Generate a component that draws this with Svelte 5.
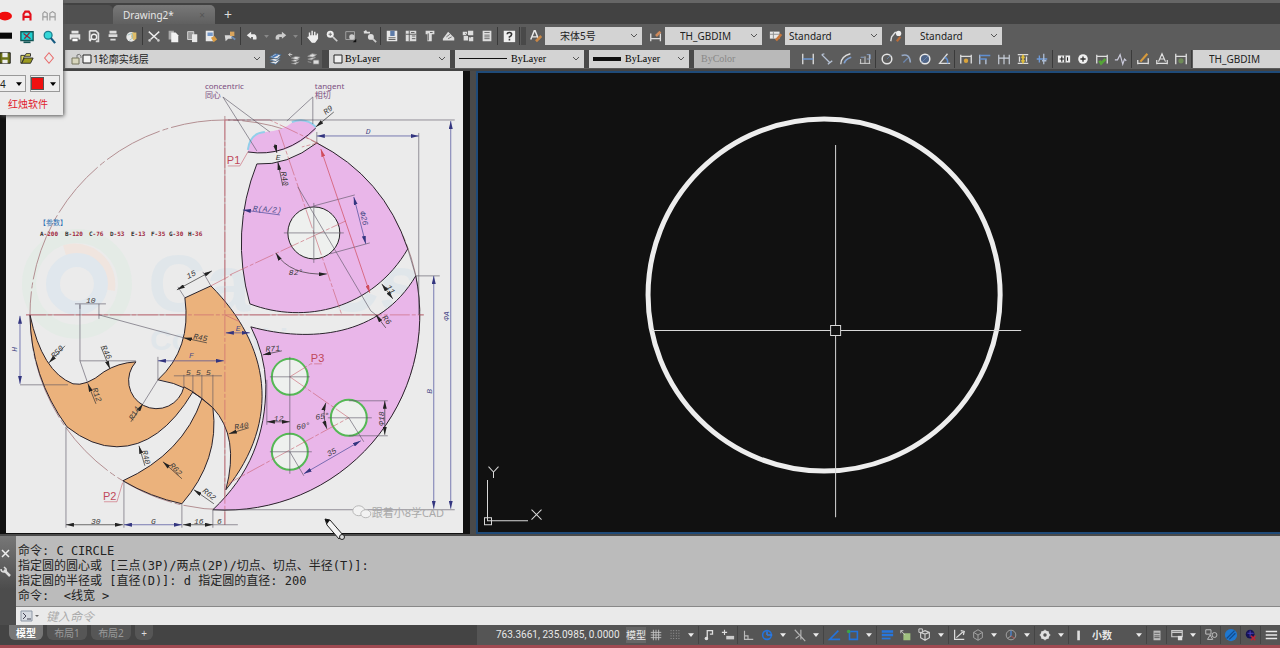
<script lang="ts">
  type Item = string;

  let command = '';

  // all icons live on a 16x16 grid
  const icons: Record<string, string> = {
    print: '<path d="M4 2h8v3H4zM2 6h12v6h-2v-2H4v2H2z" fill="#e4e4e4"/><path d="M5 11h6v3H5z" fill="#fff"/>',
    preview: '<path d="M3 2h7l3 3v9h-3M3 2v11" fill="none" stroke="#ddd" stroke-width="2"/><circle cx="8" cy="9" r="3" fill="#555" stroke="#eee" stroke-width="1.5"/><path d="M5 11l-2 3" stroke="#eee" stroke-width="2"/>',
    plot: '<path d="M4 2h8v3H4zM3 6h10v3H3zM5 11h6v2H5z" fill="#ddd"/>',
    globe: '<circle cx="7" cy="9" r="5.5" fill="#e8e8e8"/><path d="M8 4h5v7l-3 2-3-4z" fill="#e0bd67"/><path d="M3 7l5-2 1 5-4 3" fill="none" stroke="#9bb" />',
    cut: '<path d="M2 3l10 9M14 3L4 12" stroke="#eee" stroke-width="1.6"/><circle cx="3" cy="13" r="1.5" fill="#ccc"/><circle cx="13" cy="13" r="1.5" fill="#ccc"/>',
    copy: '<path d="M3 2h6v10H3z" fill="#aaa"/><path d="M6 4h5l3 3v8H6z" fill="#f2f2f2"/>',
    paste: '<path d="M3 3h7v9H3z" fill="#999" stroke="#ddd"/><path d="M8 6h6v9H8z" fill="#e8e8e8"/>',
    sheet: '<path d="M2 2h9v12H2z" fill="#e8e8e8"/><path d="M4 4h6v4H4z" fill="#7397c8"/><path d="M8 10l4-2 3 4-4 3z" fill="#d99b42"/>',
    brush: '<path d="M2 7h8v4H6l-3 3z" fill="#d7d7d7"/><path d="M8 3h5v5H8z" fill="#d9a45c"/><path d="M10 9l4 3" stroke="#6b8bb5" stroke-width="2"/>',
    undo: '<path d="M2 7l5-4v3h4q3 1 2 6H9V9H7v2z" fill="#ececec"/>',
    redo: '<path d="M14 7L9 3v3H5Q1 7 2 12h4V9h3v2z" fill="#ccc"/>',
    hand: '<path d="M4 8V4M7 8V2M10 8V3M13 9V5M4 8h9v3l-3 4H7L2 9" fill="#eee" stroke="#eee" stroke-width="1.6"/>',
    zoom: '<circle cx="6" cy="6" r="4" fill="#eee"/><path d="M9 9l5 5" stroke="#ccc" stroke-width="2"/><path d="M4 6h4M6 4v4" stroke="#666"/>',
    zoomWin: '<path d="M2 3h10v9H2z" fill="none" stroke="#aaa"/><circle cx="9" cy="9" r="3" fill="#ccc"/><path d="M14 11v4h-4z" fill="#111"/>',
    zoomPrev: '<path d="M1 4h7M1 4l3-2" stroke="#ddd" stroke-width="2"/><circle cx="9" cy="9" r="3.4" fill="#ddd"/><path d="M11 11l4 4" stroke="#ccc" stroke-width="2"/>',
    props: '<path d="M2 2h12v12H2z" fill="#e8e8e8"/><path d="M6 2h5v6H6z" fill="#5d7ba8"/><path d="M4 10h8M4 12h8" stroke="#555"/>',
    center: '<path d="M2 2h12v12H2z" fill="#ddd"/><path d="M6 2v12M2 6h12M9 8h4M9 11h4M8 4h4" stroke="#555"/>',
    palette: '<path d="M3 2h10v4h-3v8H5V6H3z" fill="#ddd"/><path d="M6 5v8M8 4h3" stroke="#555"/>',
    sheets: '<path d="M1 11l6-8 7 7v3H1z" fill="#ddd"/><path d="M5 9l4-3M7 11l4-2" stroke="#666"/>',
    markup: '<path d="M2 3h5v4H2zM8 2h6v5H8zM3 8h5v5H3zM9 9h5v5H9z" fill="#ddd"/><path d="M5 5l6 5" stroke="#555"/>',
    calc: '<path d="M3 2h10v12H3z" fill="#ddd"/><path d="M5 4h6M5 7h6M5 9h6M5 11h6" stroke="#666"/>',
    help: '<path d="M2 2h13v13H2z" fill="#f0f0f0"/><path d="M6 6q0-2 2.500-2t2.500 2-2.500 3v1M8.500 11v2" stroke="#333" stroke-width="1.800" fill="none"/>',
    textStyle: '<path d="M2 12L6 2h1l4 10M4 9h5" stroke="#e8e8e8" stroke-width="1.700" fill="none"/><path d="M8 14l6-6" stroke="#c88646" stroke-width="3"/>',
    dimStyle: '<path d="M2 5v9M13 5v9M2 11h11" stroke="#ddd" stroke-width="1.500"/><path d="M8 8l5-5" stroke="#d08a5a" stroke-width="3"/>',
    tableStyle: '<path d="M1 3h11v8H1z" fill="#e8e8e8"/><path d="M1 6h11M5 3v8" stroke="#888"/><path d="M8 13l6-7" stroke="#c9773b" stroke-width="3"/>',
    leaderStyle: '<path d="M2 14l1-5 4-5h2" stroke="#ddd" stroke-width="1.600" fill="none"/><circle cx="11" cy="5" r="3" fill="#eee"/><path d="M9 14l4-5" stroke="#b96a36" stroke-width="2.500"/>',
    layers: '<path d="M2 6l6-4 7 1-5 5zM2 9l7 2 5-5M2 12l7 2 5-5" fill="#e6e6e6" stroke="#44688f"/><path d="M5 6l6-3" stroke="#4778b8" stroke-width="2"/>',
    layerPrev: '<path d="M2 3h4M2 3l2-2M2 3l2 2" stroke="#ddd"/><path d="M5 7l5-2 5 1-4 3zM5 10l5 1 4-3M5 13l5 1 4-3" fill="#ddd" stroke="#888"/>',
    layerState: '<path d="M2 5l5-3 5 1-4 3zM2 8l4 1 5-3M2 11l4 1" fill="#ddd" stroke="#999"/><path d="M8 9h7v5H8z" fill="#ddd" stroke="#666"/>',
    dLin: '<path d="M2 2v12M14 2v12" stroke="#e0e0e0" stroke-width="1.500"/><path d="M2 8h12" stroke="#6f9bd8" stroke-width="1.600"/>',
    dAli: '<path d="M2 3l3-1M2 3l9 9M9 14l5-4" stroke="#b7c3d5" stroke-width="1.500"/>',
    dArc: '<path d="M2 14Q2 5 13 2" stroke="#ddd" stroke-width="1.500" fill="none"/><path d="M6 13Q7 8 14 6" stroke="#7c9dce" stroke-width="2" fill="none"/>',
    dOrd: '<path d="M2 13h12M3 8v5M8 5v8M13 3v10" stroke="#ddd"/><path d="M10 3h4v5h-4M3 6h4" stroke="#89a6d0" fill="none"/>',
    dRad: '<circle cx="8" cy="8" r="5.500" fill="none" stroke="#e4e4e4" stroke-width="1.700"/><path d="M8 8l4-4" stroke="#6783a8"/>',
    dJog: '<path d="M3 4Q12 1 13 12" stroke="#96a9c6" stroke-width="1.800" fill="none"/><path d="M5 12l5-5" stroke="#6b87b1" stroke-width="1.500"/>',
    dDia: '<circle cx="8" cy="8" r="5.500" fill="#4f6486" stroke="#e8e8e8" stroke-width="1.700"/><path d="M4 12l8-8" stroke="#6c87b0"/>',
    dAng: '<path d="M12 2L3 13h12" stroke="#ddd" stroke-width="1.500" fill="none"/><path d="M9 6q4 2 3 7" stroke="#5f8ed1" stroke-width="1.800" fill="none"/>',
    qdim: '<path d="M2 3v10M14 3v10M2 5h12" stroke="#ddd" stroke-width="1.500"/><circle cx="8" cy="10" r="2.500" fill="#d9a33c"/>',
    base: '<path d="M2 3v11M9 8v6" stroke="#b8c7dd" stroke-width="1.500"/><path d="M2 4h12M2 8h8" stroke="#5f8ed1" stroke-width="1.700"/>',
    cont: '<path d="M2 3v11M8 3v11M14 3v11M2 7h12" stroke="#ccd3de" stroke-width="1.300"/>',
    space: '<path d="M2 3h12M2 13h12M4 5v6M12 5v6" stroke="#ddd" stroke-width="1.500"/><path d="M8 3v10M6 6h4M6 10h4" stroke="#e0bf3c" stroke-width="2"/>',
    brk: '<path d="M2 8h12M5 4v8" stroke="#6f9bd8" stroke-width="1.500"/><path d="M10 2v12M8 10h5" stroke="#aebdd4" stroke-width="1.500"/>',
    tol: '<path d="M1 4h14v8H1z" fill="#eee"/><path d="M3 8h5M5.500 5v6M9 4v8M12 6v4" stroke="#222" stroke-width="1.300"/>',
    mark: '<circle cx="8" cy="8" r="5.500" fill="#f0f0f0"/><path d="M5 8h6M8 5v6" stroke="#333" stroke-width="1.500"/>',
    insp: '<path d="M2 3v10M14 3v10M2 5h12" stroke="#ddd" stroke-width="1.500"/><path d="M5 10l2 3 5-5" stroke="#55a437" stroke-width="3" fill="none"/>',
    jog: '<path d="M1 9h3l3-6 3 11 2-6 2 2" stroke="#ccd" stroke-width="1.300" fill="none"/>',
    dEdit: '<path d="M2 9v5M14 7v7M2 13h12" stroke="#ddd" stroke-width="1.500"/><path d="M5 11l8-9" stroke="#d79a3b" stroke-width="2.500"/>',
    dText: '<path d="M2 9v5M14 9v5M2 13h12M4 11l4-9 4 9M6 8h4" stroke="#e0e0e0" stroke-width="1.400" fill="none"/>',
    dUpd: '<path d="M2 2v12M14 2v12M2 5h12" stroke="#ddd" stroke-width="1.500"/><circle cx="8" cy="10" r="3" fill="#6f8a58"/>',
    grid: '<path d="M5 2v12M8 2v12M11 2v12M2 5h12M2 8h12M2 11h12" stroke="#c5c5c5"/>',
    snap: '<path d="M3 3h11M3 6h11M3 9h11M3 12h11" stroke="#aaa" stroke-dasharray="1 2"/>',
    infer: '<path d="M6 13V3h6v4H9" stroke="#ddd" stroke-width="1.500" fill="none"/><circle cx="5" cy="12" r="2" fill="#ddd"/>',
    dyn: '<path d="M4 2v6M1 5h6" stroke="#ddd" stroke-width="1.300"/><path d="M6 9h9v4H6z" fill="#ccc"/>',
    ortho: '<path d="M4 3v10h10M4 9h4v4" stroke="#bbb" stroke-width="1.300" fill="none"/>',
    polar: '<circle cx="8" cy="8" r="5" fill="none" stroke="#2373dc" stroke-width="1.800"/><path d="M8 8h6M8 8V4" stroke="#2e7ce6" stroke-width="1.800"/>',
    iso: '<path d="M2 2l12 13M9 2v11M3 12l4-3" stroke="#b5b5b5" stroke-width="1.300"/>',
    otrack: '<path d="M13 3L3 13h12" stroke="#2373dc" stroke-width="1.800" fill="none"/>',
    osnap: '<path d="M4 4h9v9H4z" fill="none" stroke="#2373dc" stroke-width="1.800"/><circle cx="3" cy="4" r="2" fill="#3ea444"/>',
    lwt: '<path d="M2 4h13M2 8h13" stroke="#2676dd" stroke-width="3"/><path d="M2 12h10" stroke="#2676dd" stroke-width="2"/>',
    cycle: '<path d="M5 6h8v8H5z" fill="#9fc07f"/><path d="M2 3l5 5M2 3v3M2 3h3" stroke="#ccc"/>',
    osnap3: '<path d="M8 3l5 2v6l-5 3-5-3V5zM3 5l5 2 5-2M8 7v7" fill="none" stroke="#d0d0d0" stroke-width="1.300"/><path d="M1 1h4v4H1z" fill="#555" stroke="#ddd"/>',
    ducs: '<path d="M3 2v11h11M5 11l8-7M10 3l4 1-1 4" fill="none" stroke="#ddd" stroke-width="1.400"/>',
    filter: '<path d="M8 2l5 3v6l-5 3-5-3V5zM3 5l5 3 5-3M8 8v6" fill="none" stroke="#aaa"/>',
    gizmo: '<circle cx="8" cy="8" r="5.500" fill="none" stroke="#aaa"/><path d="M8 3v6" stroke="#4a86d4" stroke-width="1.500"/><path d="M8 9l4 3" stroke="#bd5050"/><path d="M8 9l-4 3" stroke="#aaa"/>',
    gear: '<circle cx="8" cy="8" r="3.700" fill="none" stroke="#e0e0e0" stroke-width="3"/><path d="M8 2v12M2 8h12M4 4l8 8M12 4l-8 8" stroke="#e0e0e0" stroke-width="1.500"/><circle cx="8" cy="8" r="2" fill="#555"/>',
    bar: '<path d="M6 3h3v11H6z" fill="#ddd"/>',
    quick: '<path d="M4 3h8v11H4z" fill="#bbb"/><path d="M5 6h6M5 9h6M5 11h6" stroke="#555"/>',
    lock: '<path d="M2 3h12v7H2zM2 5h12" fill="none" stroke="#ccc" stroke-width="1.300"/><path d="M9 9h5v5H9z" fill="#e0e0e0"/>',
    isolate: '<path d="M2 2h6v5H2zM7 8l3 5H4z" fill="none" stroke="#ccc"/><circle cx="12" cy="8" r="2.800" fill="none" stroke="#ccc"/>',
    hw: '<circle cx="8" cy="8" r="7" fill="#1f78d1"/><path d="M3 12l9-9M6 13l7-7" stroke="#134c8f" stroke-width="1.500"/>',
    cloud: '<circle cx="7" cy="7" r="5" fill="#151255"/><path d="M4 6h7M7 3v7" stroke="#5146c9"/><path d="M8 9l5 5M13 9l-5 5" stroke="#bd2539" stroke-width="1.800"/>',
    menu: '<path d="M2 4h13M2 8h13M2 12h13" stroke="#e8e8e8" stroke-width="1.800"/>',
    // floating palette
    dot: '<ellipse cx="8" cy="8" rx="8" ry="5" fill="#f00c0c"/>',
    bigA: '<path d="M4 13V6l2-3h4l2 3v7M4 9h8" fill="none" stroke="#e3101c" stroke-width="2.400"/>',
    twoA: '<path d="M1 13V5l2-2 3 2v8M1 9h5M9 13V5l3-2 3 2v8M9 9h6" fill="none" stroke="#9a9a9a" stroke-width="1.300"/>',
    slab: '<path d="M0 3h16v7H0z" fill="#080808"/>',
    screen: '<path d="M1 2h14v10H1z" fill="#20d0d0" stroke="#155" stroke-width="1.500"/><path d="M4 4l8 6M11 3l-6 7" stroke="#8d2c3c" stroke-width="1.500"/><path d="M4 14h8" stroke="#155" stroke-width="2"/>',
    lens: '<circle cx="7" cy="6" r="4.500" fill="#35d8d8" stroke="#1c8090" stroke-width="1.500"/><path d="M10 9l5 6" stroke="#155a80" stroke-width="2.500"/>',
    save: '<path d="M2 2h12v12H2z" fill="#6d7318" stroke="#111"/><path d="M5 2h6v5H5zM5 10h6v4H5z" fill="#eee"/>',
    open: '<path d="M1 5h5l1-2h5v3H5l-3 8H1z" fill="#ded95d" stroke="#222"/><path d="M5 8h10l-3 6H2z" fill="#9b9a20" stroke="#222"/>',
    eraser: '<path d="M8 2l5 6-5 6-5-6z" fill="none" stroke="#e86a6a" stroke-width="1.200"/>'
  };

  // '|' draws a separator, '>' a small drop arrow
  const standard: Item[] = [
    'print', 'preview', 'plot', 'globe', '|', 'cut', 'copy', 'paste', 'sheet', 'brush', '|',
    'undo', '>', 'redo', '>', '|', 'hand', 'zoom', 'zoomWin', 'zoomPrev', '|',
    'props', 'center', 'palette', 'sheets', 'markup', 'calc', '|', 'help', '|'
  ];
  const styles = [
    { icon: 'textStyle', value: '宋体5号', indent: true },
    { icon: 'dimStyle', value: 'TH_GBDIM', indent: true },
    { icon: 'tableStyle', value: 'Standard', indent: false },
    { icon: 'leaderStyle', value: 'Standard', indent: true }
  ];
  const dimension: Item[] = [
    'dLin', 'dAli', 'dArc', 'dOrd', '|', 'dRad', 'dJog', 'dDia', 'dAng', '|',
    'qdim', 'base', 'cont', 'space', 'brk', '|', 'tol', 'mark', 'insp', 'jog', '|',
    'dEdit', 'dText', 'dUpd', '|'
  ];
  const statusLeft: Item[] = [
    'grid', 'snap', '>', '|', 'infer', 'dyn', '|', 'ortho', 'polar', '>', 'iso', '>', '|',
    'otrack', 'osnap', '>', '|', 'lwt', 'cycle', 'osnap3', '>', '|', 'ducs', 'filter', '>',
    'gizmo', '>', '|', 'gear', '>', '|', 'bar'
  ];
  const statusRight: Item[] = ['quick', '|', 'lock', '>', '|', 'isolate', '|', 'hw', '|', 'cloud', '|', 'menu'];
  const markers = ['dot', 'bigA', 'twoA', 'slab', 'screen', 'lens', 'save', 'open', 'eraser'];

  const history = [
    '命令: C CIRCLE',
    '指定圆的圆心或 [三点(3P)/两点(2P)/切点、切点、半径(T)]:',
    '指定圆的半径或 [直径(D)]: d 指定圆的直径: 200',
    '命令:  <线宽 >'
  ];

  const params = [
    ['A', '200'], ['B', '120'], ['C', '76'], ['D', '53'],
    ['E', '13'], ['F', '35'], ['G', '30'], ['H', '36']
  ];
  const paramX = [40, 65, 89, 110, 131, 151, 169, 188];

  // x, y, rotation, text, ink
  const labels: [number, number, number, string, string][] = [
    [326, 115, -38, 'R9', 'k'], [366, 134, 0, 'D', 'b'], [276, 160, 0, 'E', 'k'],
    [281, 172, 80, 'R40', 'k'], [253, 211, 4, 'R(A/2)', 'b'], [360, 212, 76, 'Φ26', 'b'],
    [289, 275, 0, '82°', 'k'], [386, 287, 55, '11', 'k'], [382, 318, 50, 'R6', 'k'],
    [188, 279, -26, '15', 'k'], [86, 303, 0, '10', 'k'], [193, 339, 10, 'R45', 'k'],
    [54, 359, -45, 'R50', 'k'], [101, 347, 64, 'R46', 'k'], [92, 389, 70, 'R12', 'k'],
    [133, 421, -60, 'R14', 'k'], [17, 352, -90, 'H', 'b'], [189, 358, 0, 'F', 'b'],
    [186, 375, 0, '5', 'k'], [196, 375, 0, '5', 'k'], [206, 375, 0, '5', 'k'],
    [236, 331, 0, 'E', 'b'], [266, 352, -5, 'R71', 'k'], [235, 430, -10, 'R40', 'k'],
    [142, 451, 76, 'R40', 'k'], [169, 466, 46, 'R62', 'k'], [202, 492, 38, 'R62', 'k'],
    [91, 524, 0, '30', 'k'], [151, 524, 0, 'G', 'k'], [194, 524, 0, '16', 'k'],
    [217, 524, 0, '6', 'k'], [274, 421, 0, '12', 'k'], [297, 430, -10, '60°', 'k'],
    [316, 420, -8, '65°', 'k'], [384, 426, -90, 'Φ18', 'k'], [329, 457, -30, '35', 'k'],
    [432, 394, -90, 'B', 'b'], [449, 321, -90, 'ΦA', 'b']
  ];

  // dimension lines with an arrow head at both ends
  const dims: [string, string][] = [
    ['M317 136H419', 'b'], ['M451 121V509', 'b'], ['M434 276V509', 'b'], ['M20 316V384', 'b'],
    ['M158 361H224', 'b'], ['M66 525H123', 'k'], ['M124 525H182', 'b'], ['M183 525H213', 'k'],
    ['M354 197L366 244', 'b'], ['M385 401V435', 'k'], ['M304 474L361 441', 'b'], ['M226 333H250', 'b'],
    ['M382 284L393 299', 'k'], ['M276 253Q290 276 327 274', 'k'], ['M267 422H290', 'k'],
    ['M177 290L212 271', 'k'], ['M326 403Q322 415 327 429', 'k'], ['M321 149L370 293', 'r']
  ];
  // leaders with one head at the start
  const leaders: [string, string][] = [
    ['M316 127L334 112', 'k'], ['M278 162L283 186', 'k'], ['M243 210L280 215', 'b'], ['M376 315L386 328', 'k'],
    ['M184 338L207 343', 'k'], ['M49 363L65 346', 'k'], ['M110 369L101 347', 'k'], ['M88 384L96 404', 'k'],
    ['M143 404L131 422', 'k'], ['M139 446L145 466', 'k'], ['M163 462L182 479', 'k'], ['M194 490L214 504', 'k'],
    ['M229 434L249 428', 'k'], ['M263 355L282 351', 'k'], ['M277 153L275 144', 'k']
  ];
</script>

{#snippet glyph(name: string)}
  <svg class="glyph" viewBox="0 0 16 16" aria-hidden="true">{@html icons[name]}</svg>
{/snippet}

{#snippet chevron()}
  <svg class="chevron" viewBox="0 0 8 6" aria-hidden="true"><path d="M1 1l3 3 3-3" fill="none" stroke="#555" /></svg>
{/snippet}

{#snippet strip(items: Item[])}
  {#each items as item}
    {#if item === '|'}
      <span class="sep"></span>
    {:else if item === '>'}
      <button class="drop" aria-label="more"><svg viewBox="0 0 8 5"><path d="M0 0h8L4 5z" /></svg></button>
    {:else}
      <button class="tool" aria-label={item}>{@render glyph(item)}</button>
    {/if}
  {/each}
{/snippet}

<div class="app">
  <header class="tabs">
    <span class="file-tab blank"></span>
    <button class="file-tab active">Drawing2* <span class="close">×</span></button>
    <button class="add" aria-label="new drawing">+</button>
  </header>

  <div class="toolbar first">
    {@render strip(standard)}
    <span class="grip"></span>
    {#each styles as style}
      <button class="tool" aria-label={style.icon}>{@render glyph(style.icon)}</button>
      <div class="combo named" class:indent={style.indent}>
        <select aria-label={style.icon}><option>{style.value}</option></select>
        {@render chevron()}
      </div>
    {/each}
  </div>

  <div class="toolbar second">
    <div class="combo layer">
      <svg class="lead" viewBox="0 0 24 14" aria-hidden="true">
        <path d="M3 6h7v6H3z" fill="#d8d6bd" stroke="#77765f" />
        <path d="M8 6V3q3-2 4 1v2" fill="none" stroke="#777" />
        <path d="M14 3h8v8h-8z" fill="#f4f4f4" stroke="#222" />
      </svg>
      <select aria-label="layer"><option>1轮廓实线层</option></select>
      {@render chevron()}
    </div>
    {@render strip(['layers', 'layerPrev', 'layerState'])}
    <span class="grip wide"></span>
    <div class="combo color">
      <svg class="swatch" viewBox="0 0 10 10" aria-hidden="true"><path d="M1 1h8v8H1z" fill="#eee" stroke="#222" /></svg>
      <select aria-label="color"><option>ByLayer</option></select>
      {@render chevron()}
    </div>
    <span class="grip"></span>
    <div class="combo linetype">
      <span class="sample thin"></span>
      <select aria-label="linetype"><option>ByLayer</option></select>
      {@render chevron()}
    </div>
    <span class="grip"></span>
    <div class="combo weight">
      <span class="sample thick"></span>
      <select aria-label="lineweight"><option>ByLayer</option></select>
      {@render chevron()}
    </div>
    <span class="grip"></span>
    <div class="combo plotstyle">
      <select aria-label="plot style" disabled><option>ByColor</option></select>
      {@render chevron()}
    </div>
    <span class="space"></span>
    {@render strip(dimension)}
    <div class="combo last">
      <select aria-label="dimension style"><option>TH_GBDIM</option></select>
    </div>
  </div>

  <main>
    <section class="sheet">
      <svg class="plan" viewBox="6 71 457 462" preserveAspectRatio="xMinYMin meet">
        <defs>
          {#each [['k', '#222'], ['b', '#33357f'], ['r', '#d04c5c']] as [id, fill]}
            <marker id="head-{id}" viewBox="0 0 8 4" refX="8" refY="2" markerWidth="8" markerHeight="4" markerUnits="userSpaceOnUse" orient="auto-start-reverse">
              <path d="M0 0L8 2L0 4z" {fill} />
            </marker>
          {/each}
        </defs>

        <g class="watermark">
          <circle cx="77" cy="284" r="48" stroke="#e4ebe6" />
          <path d="M65 252A34 34 0 0 1 108 290" stroke="#f0e5df" />
          <circle cx="77" cy="284" r="24" stroke="#e0e7ed" />
          <text x="148" y="311" class="big">CaTICs</text>
          <text x="150" y="350" class="mid">Competition</text>
        </g>

        <g class="axis">
          <path d="M225 116V525M26 315H424" />
          <circle cx="225" cy="315" r="195" stroke-dasharray="60 3 6 3" />
        </g>

        <g class="pink">
          <path class="soft" d="M248 152Q250 133 265 132Q283 131 293 122Q306 117 315 127L316 130Q285 159 248 152z" />
          <path d="M257 164Q287 166 317 143Q384 177 408 249C373 309 305 325 250 304Q230 232 257 164z" />
          <path d="M416 276A195 195 0 0 1 213 510C250 475 266 435 266 385Q265 354 251 327C310 343 380 337 416 276z" />
        </g>
        <g class="orange">
          <path d="M185 298L211 286C270 345 282 420 226 490Q240 437 213 408Q190 385 158 380Q192 349 185 298z" />
          <path d="M30 315Q42 372 73 384Q86 387 104 372Q118 363 136 362A28 28 0 1 0 184 387L193 392Q160 447 117 447Q92 447 67 427A195 195 0 0 1 30 315z" />
          <path d="M202 399Q183 454 123 481A195 195 0 0 0 182 504Q220 460 213 408z" />
        </g>
        <path class="edge" d="M248 152Q286 158 316 128M193 392L202 399" />
        <path class="cyan" d="M248 150Q250 133 265 132M292 122Q306 117 316 127" />

        <circle class="hole" cx="314" cy="233" r="26" />
        <circle class="hole green" cx="290" cy="377" r="18" />
        <circle class="hole green" cx="349" cy="418" r="18" />
        <circle class="hole green" cx="290" cy="452" r="18" />

        <g class="red">
          <path d="M225 120V525M26 315H424M225 120H270L318 143L302 147M279 130L342 315M230 275L346 221" />
          <path d="M290 377L349 418L228 484M290 377L311 364H322M240 166H228M240 166L248 152M117 502H104M117 502L123 482" />
          <path d="M211 286L232 275M225 315L240 322" />
        </g>
        <g class="thin">
          <path d="M223 97L257 151M223 97L270 132M313 97L287 121M313 97V124M298 187L371 311L380 318" />
          <path d="M99 315L184 338M80 305V361L88 384M80 361H136M75 304H106M80 304V309M99 304V319M20 385H68M158 380L143 404M158 380V357" />
          <path d="M66 427V528M124 481V528M182 504V528M213 510V528M184 387V375M193 392V375M202 399V375M213 408V375M174 376H222M213 525H238" />
          <path d="M317 143V132M419 133V315M314 206L355 195M330 254L370 243M349 401H388M349 436H388M349 418L364 442M290 452L304 476M290 357V474M270 377H310M270 452H312M328 418H372M284 233H344M314 203V263" />
          <path d="M408 249L416 276H440M267 380V425M185 298L178 287M211 286L203 272M228 120H455M213 510H455" />
        </g>

        {#each dims as [d, ink]}
          <path class="dim {ink}" {d} marker-start="url(#head-{ink})" marker-end="url(#head-{ink})" />
        {/each}
        {#each leaders as [d, ink]}
          <path class="dim {ink}" {d} marker-start="url(#head-{ink})" />
        {/each}

        {#each labels as [x, y, turn, text, ink]}
          <text class="label {ink}" transform="translate({x} {y}) rotate({turn})">{text}</text>
        {/each}

        <g class="note">
          <text x="205" y="89">concentric</text>
          <text x="205" y="98">同心</text>
          <text x="315" y="89">tangent</text>
          <text x="315" y="98">相切</text>
        </g>
        <g class="point">
          <text x="227" y="164">P1</text>
          <text x="103" y="500">P2</text>
          <text x="311" y="362">P3</text>
        </g>
        <text class="caption" x="39" y="225">【参数】</text>
        {#each params as [name, value], i}
          <text class="param" x={paramX[i]} y="236">{name}<tspan class="value">-{value}</tspan></text>
        {/each}
        <g class="brand">
          <ellipse cx="359" cy="511" rx="6" ry="5" />
          <ellipse cx="366" cy="514" rx="5" ry="4" />
          <text x="372" y="517">跟着小8学CAD</text>
        </g>
      </svg>
      <svg class="pencil" viewBox="0 0 22 23" aria-hidden="true">
        <path d="M1 1l5 1 13 15-4 4L3 7z" fill="#f4f4f4" stroke="#222" />
        <path d="M1 1l5 1-3 4z" fill="#111" />
        <circle cx="18" cy="19" r="2.500" fill="#ddd" stroke="#222" />
      </svg>
    </section>

    <section class="model">
      <svg viewBox="478 73 802 458" preserveAspectRatio="xMinYMin meet">
        <circle cx="824" cy="295" r="176" class="ring" />
        <path class="cross" d="M652 330.500H830M841 330.500H1021M835.500 145V325M835.500 336V517M830.500 325.500h10v10h-10z" />
        <path class="ucs" d="M484.500 517.500h7v7h-7zM487.500 480V521M488 520.500H528" />
        <path class="ucs" d="M488.500 466.500L493.500 472L498.500 466.500M493.500 472V478M531.500 509.500L541.500 519.500M541.500 509.500L531.500 519.500" />
      </svg>
    </section>
  </main>

  <section class="console">
    <div class="rail">
      <svg viewBox="0 0 12 12"><path d="M2 2l7 7M9 2l-7 7" stroke="#eee" stroke-width="1.500" /></svg>
      <svg viewBox="0 0 12 12"><path d="M4 4l6 6" stroke="#ddd" stroke-width="2.500" /><path d="M1 3q0 3 3 3t2-3L4 1" fill="none" stroke="#ddd" stroke-width="1.500" /></svg>
    </div>
    <div class="log">
      <pre>{history.join('\n')}</pre>
      <label class="prompt">
        <svg viewBox="0 0 22 12" aria-hidden="true">
          <path d="M1 1h11v10H1z" fill="#d5dae0" stroke="#8d97a5" />
          <path d="M3 3l3 3-3 3M7 9h4" fill="none" stroke="#445" />
          <path d="M15 5h4l-2 2z" fill="#666" />
        </svg>
        <input bind:value={command} placeholder="键入命令" aria-label="command" />
      </label>
    </div>
  </section>

  <footer>
    <nav>
      <button class="layout current">模型</button>
      <button class="layout">布局1</button>
      <button class="layout">布局2</button>
      <button class="layout plus" aria-label="new layout">+</button>
    </nav>
    <div class="status">
      <output>763.3661, 235.0985, 0.0000</output>
      <button class="space-name">模型</button>
      {@render strip(statusLeft)}
      <div class="units">
        <select aria-label="units"><option>小数</option></select>
        <svg viewBox="0 0 8 5" aria-hidden="true"><path d="M0 0h8L4 5z" /></svg>
      </div>
      <span class="sep"></span>
      {@render strip(statusRight)}
    </div>
  </footer>

  <aside class="pens">
    <div class="keys">
      {#each markers as name}
        <button aria-label={name}>{@render glyph(name)}</button>
      {/each}
    </div>
    <div class="picks">
      <div class="pick">
        <select aria-label="pen width"><option>4</option></select>
        <svg viewBox="0 0 8 5"><path d="M0 0h8L4 5z" /></svg>
      </div>
      <button class="pick ink" aria-label="pen color">
        <i></i>
        <svg viewBox="0 0 8 5"><path d="M0 0h8L4 5z" /></svg>
      </button>
    </div>
    <p>红烛软件</p>
  </aside>
</div>

<style>
  :global(body) {
    margin: 0;
    background: #444;
  }

  .app {
    position: relative;
    display: flex;
    flex-direction: column;
    min-height: 100vh;
    overflow: hidden;
    font: 10px/14px 'Noto Sans', 'Noto Sans CJK SC', sans-serif;
    color: #222;
  }

  button,
  select,
  input {
    margin: 0;
    padding: 0;
    border: 0;
    background: none;
    color: inherit;
    font: inherit;
    appearance: none;
    outline: none;
  }

  svg {
    display: block;
  }

  .tabs {
    display: flex;
    align-items: stretch;
    height: 19px;
    padding-top: 2px;
    border-top: 3px solid #666;
    background: #424242;
  }

  .file-tab {
    width: 102px;
    border-radius: 5px 5px 0 0;
  }

  .file-tab.blank {
    width: 113px;
    background: #505050;
  }

  .file-tab.active {
    display: flex;
    justify-content: space-between;
    align-items: center;
    padding: 0 10px;
    background: linear-gradient(#787878, #606060);
    color: #e6e6e6;
  }

  .close {
    color: #555;
  }

  .add {
    width: 26px;
    color: #ddd;
    font-size: 14px;
  }

  .toolbar {
    display: flex;
    align-items: center;
    padding-left: 65px;
    background: #5c5c5c;
  }

  .toolbar.first {
    height: 24px;
  }

  .toolbar.second {
    height: 21px;
    border-bottom: 2px solid #444;
  }

  .tool {
    display: flex;
    flex: none;
    justify-content: center;
    width: 19px;
  }

  .glyph {
    width: 14px;
    height: 14px;
  }

  .drop {
    display: flex;
    flex: none;
    justify-content: center;
    width: 10px;
  }

  .drop svg {
    width: 5px;
    height: 3px;
    fill: #888;
  }

  .sep {
    flex: none;
    width: 1px;
    height: 18px;
    margin: 0 1px;
    background: #3a3a3a;
  }

  .grip {
    flex: none;
    width: 5px;
    height: 18px;
    background: #494949;
  }

  .grip.wide {
    width: 7px;
  }

  .space {
    width: 8px;
  }

  .combo {
    display: flex;
    flex: none;
    align-items: center;
    box-sizing: border-box;
    height: 18px;
    padding: 0 4px;
    background: #d3d3d3;
  }

  .combo select {
    flex: 1;
    min-width: 0;
    height: 18px;
  }

  .chevron {
    width: 8px;
    height: 6px;
  }

  .named {
    width: 97px;
    margin-right: 4px;
  }

  .indent {
    padding-left: 15px;
  }

  .layer {
    width: 200px;
  }

  .lead {
    width: 24px;
    height: 14px;
  }

  .color,
  .linetype,
  .weight,
  .plotstyle {
    font: 10px/14px 'Liberation Serif', serif;
    color: #000;
  }

  .color {
    width: 121px;
  }

  .linetype {
    width: 129px;
  }

  .weight {
    width: 100px;
  }

  .plotstyle {
    width: 96px;
    padding-left: 7px;
    background: #b9b9b9;
    color: #888;
  }

  .plotstyle select {
    opacity: 1;
  }

  .plotstyle .chevron {
    visibility: hidden;
  }

  .swatch {
    width: 10px;
    height: 10px;
    margin-right: 2px;
  }

  .sample {
    flex: none;
    margin-right: 4px;
    background: #111;
  }

  .thin {
    width: 48px;
    height: 1px;
  }

  .thick {
    width: 28px;
    height: 4px;
  }

  .last {
    flex: 1;
    padding-left: 16px;
  }

  main {
    display: flex;
    flex: 1;
    background: #4a4a4a;
  }

  .sheet {
    position: relative;
    flex: none;
    width: 36.7%;
    padding: 0 7px 0 6px;
    box-sizing: border-box;
    background: #111;
  }

  .plan {
    width: 100%;
    background: #ebebeb;
  }

  .pencil {
    position: absolute;
    left: 69%;
    bottom: -7px;
    width: 22px;
    height: 23px;
    z-index: 1;
  }

  .model {
    flex: 1;
    margin-left: 6px;
    border: 2px solid #1f4a78;
    border-right: 0;
    background: #111;
  }

  .ring {
    fill: none;
    stroke: #ededed;
    stroke-width: 5;
  }

  .cross,
  .ucs {
    fill: none;
    stroke: #d8d8d8;
  }

  .watermark {
    fill: none;
    stroke-width: 14;
  }

  .watermark text {
    fill: #e0e6ea;
    stroke: none;
    font-family: 'Liberation Sans', sans-serif;
    font-weight: bold;
  }

  .big {
    font-size: 80px;
  }

  .mid {
    font-size: 30px;
  }

  .axis,
  .red,
  .thin {
    fill: none;
    stroke-width: 1;
  }

  .axis {
    stroke: #b38f92;
  }

  .red {
    stroke: #c9606e;
    stroke-opacity: 0.6;
    stroke-dasharray: 20 2 4 2;
  }

  .thin {
    stroke: #55505f;
    stroke-opacity: 0.6;
  }

  .pink,
  .orange,
  .edge {
    stroke: #29222b;
    stroke-width: 1;
  }

  .pink {
    fill: #e9b6e9;
  }

  .orange {
    fill: #ebb27c;
  }

  .soft {
    stroke: none;
  }

  .edge,
  .cyan {
    fill: none;
  }

  .cyan {
    stroke: #92cfea;
    stroke-width: 2;
  }

  .hole {
    fill: #eef0ee;
    stroke: #222;
    stroke-width: 1;
  }

  .hole.green {
    stroke: #55b855;
    stroke-width: 2;
  }

  .dim {
    fill: none;
    stroke-width: 1;
    stroke-opacity: 0.7;
  }

  .dim.k {
    stroke: #333;
  }

  .dim.b {
    stroke: #484a9a;
  }

  .dim.r {
    stroke: #d04c5c;
  }

  .label {
    font: italic 8px 'Liberation Mono', monospace;
    fill: #3a3a3a;
  }

  .label.b {
    fill: #4a4c88;
  }

  .note text {
    font-size: 8px;
    fill: #7b4d80;
  }

  .point text {
    font: 11px 'Liberation Sans', sans-serif;
    fill: #c0485a;
  }

  .caption {
    font-size: 7px;
    fill: #2c6fb2;
  }

  .param {
    font: bold 6px 'DejaVu Sans Mono', monospace;
    fill: #333;
  }

  .value {
    fill: #a0283c;
  }

  .brand {
    fill: #f2f2f2;
    stroke: #b8b8b8;
  }

  .brand text {
    font-size: 11px;
    fill: #a9a9a9;
    stroke: none;
  }

  .console {
    display: flex;
    border-top: 2px solid #4a4a4a;
  }

  .rail {
    display: flex;
    flex-direction: column;
    gap: 6px;
    width: 16px;
    padding-top: 12px;
    box-sizing: border-box;
    background: linear-gradient(#777, #4c4c4c 60%);
  }

  .rail svg {
    width: 12px;
    height: 12px;
  }

  .log {
    flex: 1;
  }

  pre {
    margin: 0;
    padding: 8px 2px 2px;
    background: #bbb;
    border-bottom: 1px solid #888;
    font: 12px/15px 'DejaVu Sans Mono', 'Noto Sans CJK SC', monospace;
  }

  .prompt {
    display: flex;
    align-items: center;
    height: 18px;
    padding-left: 4px;
    background: #eaeaea;
  }

  .prompt svg {
    width: 22px;
    height: 12px;
  }

  .prompt input {
    flex: 1;
    margin-left: 4px;
    font: italic 12px/16px 'Noto Sans CJK SC', sans-serif;
  }

  .prompt input::placeholder {
    color: #aaa;
  }

  footer {
    display: flex;
    justify-content: space-between;
    height: 20px;
    background: #444;
    border-bottom: 3px solid #a04a52;
    color: #e8e8e8;
  }

  nav {
    display: flex;
    gap: 4px;
    padding-left: 9px;
  }

  .layout {
    width: 40px;
    height: 15px;
    border-radius: 0 0 6px 6px;
    background: #565656;
    color: #999;
  }

  .layout.current {
    width: 34px;
    background: #777;
    color: #fff;
    font-weight: bold;
  }

  .layout.plus {
    width: 18px;
    color: #ddd;
  }

  .status {
    display: flex;
    align-items: center;
    padding-left: 19px;
    background: #555;
  }

  .status output {
    width: 130px;
    font-family: Roboto, sans-serif;
    white-space: nowrap;
  }

  .space-name {
    width: 20px;
    height: 16px;
    background: #666;
    white-space: nowrap;
  }

  .status .sep {
    margin: 0;
    background: #444;
  }

  .status .drop {
    width: 14px;
  }

  .status .drop svg,
  .units svg {
    width: 6px;
    height: 4px;
    fill: #ececec;
  }

  .units {
    display: flex;
    align-items: center;
    width: 58px;
    box-sizing: border-box;
    padding: 0 4px;
    font-weight: bold;
  }

  .units select {
    flex: 1;
  }

  .pens {
    position: absolute;
    top: 0;
    left: 0;
    width: 63px;
    height: 115px;
    overflow: hidden;
    background: #ebebeb;
    box-shadow: 1px 1px 4px #555;
  }

  .keys {
    display: grid;
    grid-template-columns: repeat(3, 22px);
    grid-auto-rows: 21px;
    margin: 5px 0 0 -6px;
  }

  .keys button {
    display: flex;
    align-items: center;
    justify-content: center;
  }

  .picks {
    display: flex;
    gap: 4px;
    margin-top: 7px;
  }

  .pick {
    display: flex;
    align-items: center;
    justify-content: space-between;
    box-sizing: border-box;
    width: 26px;
    height: 17px;
    padding-right: 3px;
    border: 1px solid #999;
    border-left: 0;
    background: #eee;
  }

  .pick select {
    width: 12px;
  }

  .pick svg {
    width: 6px;
    height: 4px;
  }

  .pick.ink {
    width: 30px;
    border-left: 1px solid #999;
  }

  .pick i {
    width: 13px;
    height: 13px;
    border: 1px solid #555;
    box-sizing: border-box;
    background: #f01010;
  }

  .pens p {
    margin: 5px 0 0 8px;
    color: #e0202c;
    white-space: nowrap;
  }
</style>
